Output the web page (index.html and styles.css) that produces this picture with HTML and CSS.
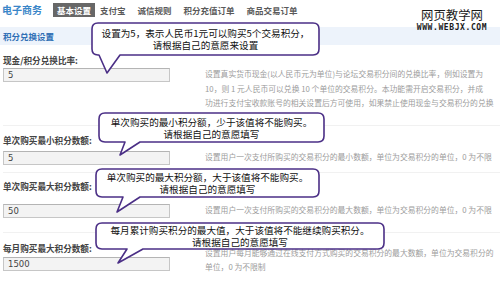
FILE: index.html
```html
<!DOCTYPE html>
<html lang="zh-CN">
<head>
<meta charset="utf-8">
<title>积分兑换设置</title>
<link rel="stylesheet" href="styles.css">
</head>
<body>
<div class="page">
  <nav class="nav">
    <span class="brand">电子商务</span>
    <span class="tab tab-active">基本设置</span>
    <span class="tab">支付宝</span>
    <span class="tab">诚信规则</span>
    <span class="tab">积分充值订单</span>
    <span class="tab">商品交易订单</span>
  </nav>

  <div class="section-head">积分兑换设置</div>

  <div class="form">
    <div class="row row-1">
      <div class="label">现金/积分兑换比率:</div>
      <input class="field" type="text" value="5" readonly>
      <div class="desc">
        <div class="line">设置真实货币现金(以人民币元为单位)与论坛交易积分间的兑换比率，例如设置为</div>
        <div class="line">10，则 1 元人民币可以兑换 10 个单位的交易积分。本功能需开启交易积分，并成</div>
        <div class="line">功进行支付宝收款账号的相关设置后方可使用，如果禁止使用现金与交易积分的兑换</div>
      </div>
    </div>
    <div class="row row-2">
      <div class="label">单次购买最小积分数额:</div>
      <input class="field" type="text" value="5" readonly>
      <div class="desc">
        <div class="line">设置用户一次支付所购买的交易积分的最小数额，单位为交易积分的单位，0 为不限</div>
      </div>
    </div>
    <div class="row row-3">
      <div class="label">单次购买最大积分数额:</div>
      <input class="field" type="text" value="50" readonly>
      <div class="desc">
        <div class="line">设置用户一次支付所购买的交易积分的最大数额，单位为交易积分的单位，0 为不限</div>
      </div>
    </div>
    <div class="row row-4">
      <div class="label">每月购买最大积分数额:</div>
      <input class="field" type="text" value="1500" readonly>
      <div class="desc">
        <div class="line">设置用户每月能够通过在线支付方式购买的交易积分的最大数额，单位为交易积分的</div>
        <div class="line">单位，0 为不限制</div>
      </div>
    </div>
  </div>

  <div class="logo">
    <div class="logo-cn">网页教学网</div>
    <div class="logo-en">WWW.WEBJX.COM</div>
  </div>

  <div class="callout c1">
    <svg class="bubble" width="229" height="52" viewBox="0 0 229 52">
      <path d="M7,1 H222 Q228,1 228,7 V27 Q228,33 222,33 H29 L16,51 L8,33 H7 Q1,33 1,27 V7 Q1,1 7,1 Z"/>
    </svg>
    <p class="callout-text">设置为5，表示人民币1元可以购买5个交易积分，<br>请根据自己的意愿来设置</p>
  </div>

  <div class="callout c2">
    <svg class="bubble" width="227" height="44" viewBox="0 0 227 44">
      <path d="M7,1 H220 Q226,1 226,7 V24 Q226,30 220,30 H42 L22,43 L27,30 H7 Q1,30 1,24 V7 Q1,1 7,1 Z"/>
    </svg>
    <p class="callout-text">单次购买的最小积分额，少于该值将不能购买。<br>请根据自己的意愿填写</p>
  </div>

  <div class="callout c3">
    <svg class="bubble" width="225" height="45" viewBox="0 0 225 45">
      <path d="M7,1 H218 Q224,1 224,7 V23 Q224,29 218,29 H45 L22,44 L28,29 H7 Q1,29 1,23 V7 Q1,1 7,1 Z"/>
    </svg>
    <p class="callout-text">单次购买的最大积分额，大于该值将不能购买。<br>请根据自己的意愿填写</p>
  </div>

  <div class="callout c4">
    <svg class="bubble" width="290" height="42" viewBox="0 0 290 42">
      <path d="M7,1 H283 Q289,1 289,7 V21 Q289,27 283,27 H48 L23,41 L32,27 H7 Q1,27 1,21 V7 Q1,1 7,1 Z"/>
    </svg>
    <p class="callout-text">每月累计购买积分的最大值，大于该值将不能继续购买积分。<br>请根据自己的意愿填写</p>
  </div>
</div>
</body>
</html>
```

FILE: styles.css
```css
html, body {
  margin: 0;
  padding: 0;
  background: #ffffff;
}

.page {
  position: relative;
  width: 500px;
  height: 285px;
  overflow: hidden;
  font-family: "Noto Sans CJK SC", "Noto Sans", sans-serif;
  color: #333;
}

/* top navigation */
.nav {
  display: flex;
  align-items: center;
  height: 20px;
  padding-left: 2px;
}

.brand {
  font-size: 10px;
  line-height: 12px;
  font-weight: bold;
  color: #3a86c8;
  margin-right: 11px;
}

.tab {
  font-size: 8.5px;
  line-height: 10px;
  font-weight: bold;
  color: #5a5a5a;
  padding: 2px 6px;
}

.tab-active {
  background: #676767;
  color: #ffffff;
  padding: 2px 4px;
  margin-right: -1px;
}

/* section header */
.section-head {
  margin-top: 7px;
  height: 18px;
  line-height: 18px;
  padding-left: 3px;
  background: #edf3fb;
  font-size: 8.5px;
  font-weight: bold;
  color: #2f6fb5;
}

/* form rows */
.form {
  padding-left: 3px;
}

.row {
  display: grid;
  grid-template-columns: 167px 290px;
  column-gap: 35px;
  grid-template-areas:
    "label ."
    "input desc";
  border-bottom: 1px solid #f1f1f1;
}

.row-1 { padding: 9px 0 14px; row-gap: 2px; }
.row-2 { padding: 8px 0 7px; row-gap: 5px; }
.row-3 { padding: 7px 0 14px; row-gap: 12px; }
.row-4 { padding: 9px 0 0; row-gap: 3px; border-bottom: none; }

.label {
  grid-area: label;
  font-size: 8.6px;
  line-height: 12px;
  font-weight: bold;
  color: #444;
  white-space: nowrap;
}

.field {
  grid-area: input;
  box-sizing: border-box;
  width: 167px;
  height: 14px;
  margin: 0;
  padding: 0 4px;
  border: 1px solid #c6c6c6;
  border-top-color: #b4b4b4;
  background: #f3f3f3;
  font-family: "DejaVu Sans", sans-serif;
  font-size: 8.5px;
  color: #444;
  outline: none;
}

.desc {
  grid-area: desc;
  align-self: start;
  margin-top: -1px;
  font-size: 7.8px;
  line-height: 14.5px;
  color: #9c9c9c;
  overflow: hidden;
}

.row-4 .desc { margin-top: -11px; }

.line {
  white-space: nowrap;
}

/* watermark logo */
.logo {
  position: absolute;
  left: 416px;
  top: 8px;
  width: 72px;
  text-align: center;
}

.logo-cn {
  font-size: 12.4px;
  line-height: 15px;
  color: #1a1a1a;
}

.logo-en {
  font-family: "DejaVu Sans Mono", monospace;
  font-weight: bold;
  font-size: 8px;
  line-height: 8px;
  letter-spacing: 0.6px;
  color: #1a1a1a;
  margin-top: 1px;
}

/* callout bubbles */
.callout {
  position: absolute;
  display: flex;
  align-items: center;
  justify-content: center;
}

.c1 { left: 91px; top: 22px; width: 229px; height: 34px; }
.c2 { left: 98px; top: 112px; width: 227px; height: 31px; }
.c3 { left: 95px; top: 168px; width: 225px; height: 30px; }
.c4 { left: 95px; top: 222px; width: 290px; height: 28px; }

.bubble {
  position: absolute;
  left: 0;
  top: 0;
  overflow: visible;
}

.bubble path {
  fill: #ffffff;
  stroke: #4b2f86;
  stroke-width: 1.6;
  stroke-linejoin: round;
}

.callout-text {
  position: relative;
  margin: 0;
  font-size: 9.6px;
  line-height: 12px;
  color: #111;
  text-align: center;
  white-space: nowrap;
}
```
